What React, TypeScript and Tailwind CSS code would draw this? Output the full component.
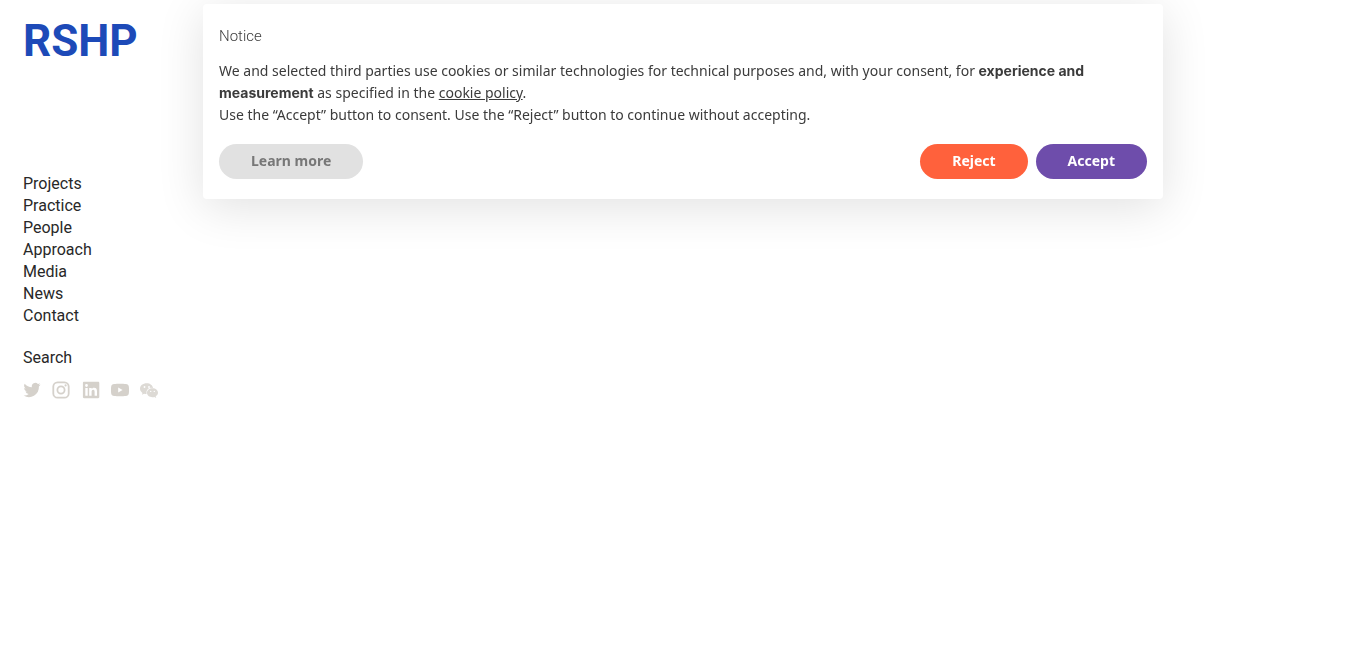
import React from 'react';

const navItems = ['Projects', 'Practice', 'People', 'Approach', 'Media', 'News', 'Contact'];

interface SocialLink {
  label: string;
  icon: React.ReactNode;
}

const socialLinks: SocialLink[] = [
  {
    label: 'Twitter',
    icon: (
      <path d="M17.600 3.600a7 7 0 0 1-2 .6 3.500 3.500 0 0 0 1.500-1.900 7 7 0 0 1-2.200.8 3.500 3.500 0 0 0-6 3.200A9.900 9.900 0 0 1 1.700 2.700a3.500 3.500 0 0 0 1.100 4.700 3.500 3.500 0 0 1-1.600-.4c0 1.700 1.200 3.100 2.800 3.400a3.500 3.500 0 0 1-1.600.1 3.500 3.500 0 0 0 3.300 2.400A7 7 0 0 1 .6 14.400 9.900 9.900 0 0 0 15.900 5.600 7 7 0 0 0 17.600 3.600Z" />
    ),
  },
  {
    label: 'Instagram',
    icon: (
      <>
        <rect x="1.300" y="1.300" width="15.400" height="15.400" rx="4.300" fill="none" stroke="currentColor" strokeWidth="1.800" />
        <circle cx="9" cy="9" r="3.600" fill="none" stroke="currentColor" strokeWidth="1.800" />
        <circle cx="13.600" cy="4.400" r="1.100" />
      </>
    ),
  },
  {
    label: 'LinkedIn',
    icon: (
      <path
        fillRule="evenodd"
        d="M2 .8h14.200c.6 0 1.100.5 1.100 1.100v14.200c0 .6-.5 1.100-1.100 1.100H2c-.6 0-1.100-.5-1.100-1.100V1.900C.9 1.300 1.400.8 2 .8ZM3.300 7v7.800h2.400V7ZM4.500 3.100a1.400 1.400 0 1 0 0 2.800 1.400 1.400 0 0 0 0-2.800ZM7.200 7v7.800h2.400V11c0-1.200.3-2.200 1.600-2.200s1.400 1.200 1.400 2.200v3.800H15v-4.300c0-2.100-.5-3.700-2.900-3.700-1.200 0-2 .6-2.400 1.200V7Z"
      />
    ),
  },
  {
    label: 'YouTube',
    icon: (
      <path
        fillRule="evenodd"
        d="M3.200 3C6 2.700 12 2.700 14.800 3c1.900.2 2.800.9 3 2.600.3 2.200.3 4.600 0 6.800-.2 1.700-1.100 2.400-3 2.600-2.800.3-8.800.3-11.600 0-1.900-.2-2.800-.9-3-2.600-.3-2.200-.3-4.600 0-6.800.2-1.700 1.100-2.400 3-2.600Zm4 3.500v5L11.600 9Z"
      />
    ),
  },
  {
    label: 'WeChat',
    icon: (
      <g opacity="0.8">
        <path
          fillRule="evenodd"
          d="M6.700 2.300C3 2.300 0 4.700 0 7.700c0 1.700 1 3.200 2.500 4.200l-.6 1.900 2.200-1.100c.7.200 1.600.4 2.400.4a4.900 4.900 0 0 1 6.500-6C12.700 4.400 10 2.300 6.700 2.300ZM4.500 5.100a.9.900 0 1 1 0 1.800.9.900 0 0 1 0-1.800Zm4.500 0a.9.900 0 1 1 0 1.800.9.900 0 0 1 0-1.800Z"
        />
        <path
          fillRule="evenodd"
          d="M12.500 7.300c-3.100 0-5.500 2-5.500 4.500s2.400 4.400 5.500 4.400c.7 0 1.300-.1 1.900-.3l1.800 1-.5-1.600c1.400-.8 2.300-2.100 2.300-3.500 0-2.500-2.400-4.500-5.500-4.500Zm-1.800 2.400a.7.700 0 1 1 0 1.400.7.700 0 0 1 0-1.400Zm3.600 0a.7.700 0 1 1 0 1.400.7.700 0 0 1 0-1.400Z"
        />
      </g>
    ),
  },
];

const Sidebar: React.FC = () => (
  <header className="px-[23px] pt-[15px] font-['Roboto',sans-serif] text-[#282828]">
    <a href="#" className="block w-fit text-[44px] leading-[52px] font-bold text-[#1d4ab8]">
      RSHP
    </a>
    <nav className="mt-[106px] text-base leading-[22px]">
      <ul>
        {navItems.map((item) => (
          <li key={item}>
            <a href="#" className="hover:underline">{item}</a>
          </li>
        ))}
      </ul>
      <a href="#" className="mt-5 block w-fit hover:underline">Search</a>
    </nav>
    <ul className="mt-3 flex w-[135px] justify-between text-[#d5d1cb]">
      {socialLinks.map(({ label, icon }) => (
        <li key={label}>
          <a href="#" aria-label={label} className="block">
            <svg viewBox="0 0 18 18" fill="currentColor" className="size-[18px]">
              {icon}
            </svg>
          </a>
        </li>
      ))}
    </ul>
  </header>
);

const CookieNotice: React.FC = () => (
  <div className="pointer-events-none fixed inset-x-0 top-1 flex justify-center">
    <section
      aria-labelledby="notice-title"
      className="pointer-events-auto w-full max-w-[960px] rounded bg-white px-4 pt-[21px] pb-5 font-['Noto_Sans',sans-serif] text-sm leading-[22px] text-[#3b3b3b] shadow-[0_8px_48px_rgba(0,0,0,0.12)]"
    >
      <h2 id="notice-title" className="font-['Roboto',sans-serif] text-[15px] font-light">Notice</h2>
      <p className="mt-[13px]">
        We and selected third parties use cookies or similar technologies for technical purposes and, with your
        consent, for <strong className="font-['Inter',sans-serif] font-bold">experience and measurement</strong> as
        specified in the <a href="#" className="underline underline-offset-1">cookie policy</a>.
        <br />
        Use the “Accept” button to consent. Use the “Reject” button to continue without accepting.
      </p>
      <div className="mt-[18px] flex flex-wrap justify-between gap-2 font-bold">
        <button type="button" className="h-[35px] rounded-full bg-[#e1e1e1] px-8 pb-0.5 text-[#777]">Learn more</button>
        <div className="flex gap-2 text-white">
          <button type="button" className="h-[35px] rounded-full bg-[#ff613c] px-8 pb-0.5">Reject</button>
          <button type="button" className="h-[35px] rounded-full bg-[#6e4dab] px-8 pb-0.5">Accept</button>
        </div>
      </div>
    </section>
  </div>
);

const App: React.FC = () => (
  <div className="min-h-screen bg-white">
    <Sidebar />
    <CookieNotice />
  </div>
);

export default App;
